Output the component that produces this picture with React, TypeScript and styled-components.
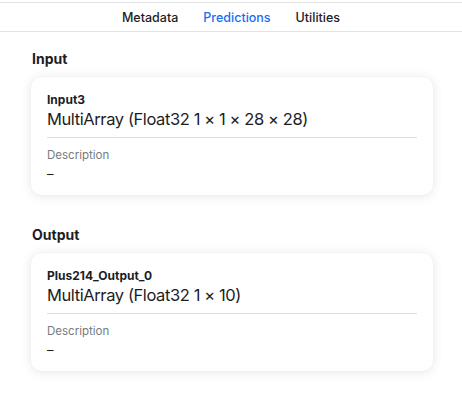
import React from 'react';
import styled, { createGlobalStyle } from 'styled-components';

const GlobalStyle = createGlobalStyle`
  body {
    margin: 0;
    background: #ffffff;
    font-family: Inter, "Liberation Sans", sans-serif;
    color: #1d1d1f;
    -webkit-font-smoothing: antialiased;
  }
`;

const TabBar = styled.nav`
  margin-top: 2px;
  height: 28px;
  border-top: 1px solid #e3e3e3;
  border-bottom: 1px solid #e3e3e3;
  display: flex;
  justify-content: center;
  align-items: center;
  gap: 25px;
`;

const Tab = styled.span<{ $active?: boolean }>`
  font-size: 12.5px;
  font-weight: 500;
  color: ${(p) => (p.$active ? '#1a6cf5' : '#1d1d1f')};
`;

const Content = styled.main`
  padding: 18px 29px 0 31px;
  display: flex;
  flex-direction: column;
`;

const SectionTitle = styled.h2`
  margin: 0 0 10px 1px;
  font-size: 14px;
  line-height: 17px;
  font-weight: 700;
`;

const Card = styled.section`
  background: #fff;
  border-radius: 10px;
  box-shadow: 0 0 1px rgba(0, 0, 0, 0.08), 0 1px 12px rgba(0, 0, 0, 0.1);
  padding: 15px 16px 12px;
  margin-bottom: 31px;
`;

const FieldName = styled.div`
  font-size: 12px;
  line-height: 15px;
  font-weight: 700;
  margin-bottom: 2px;
`;

const FieldType = styled.div`
  font-size: 16.5px;
  line-height: 21px;
  letter-spacing: -0.4px;
  padding-bottom: 7px;
  border-bottom: 1px solid #dedede;
`;

const Label = styled.div`
  margin-top: 10px;
  font-size: 11.5px;
  line-height: 15px;
  color: #7a7a7a;
`;

const Value = styled.div`
  margin-top: 2px;
  font-size: 13px;
  line-height: 18px;
`;

type Feature = { section: string; name: string; type: string };

const features: Feature[] = [
  { section: 'Input', name: 'Input3', type: 'MultiArray (Float32 1 × 1 × 28 × 28)' },
  { section: 'Output', name: 'Plus214_Output_0', type: 'MultiArray (Float32 1 × 10)' },
];

export default function App() {
  return (
    <>
      <GlobalStyle />
      <TabBar>
        <Tab>Metadata</Tab>
        <Tab $active>Predictions</Tab>
        <Tab>Utilities</Tab>
      </TabBar>
      <Content>
        {features.map((f) => (
          <React.Fragment key={f.section}>
            <SectionTitle>{f.section}</SectionTitle>
            <Card>
              <FieldName>{f.name}</FieldName>
              <FieldType>{f.type}</FieldType>
              <Label>Description</Label>
              <Value>–</Value>
            </Card>
          </React.Fragment>
        ))}
      </Content>
    </>
  );
}
